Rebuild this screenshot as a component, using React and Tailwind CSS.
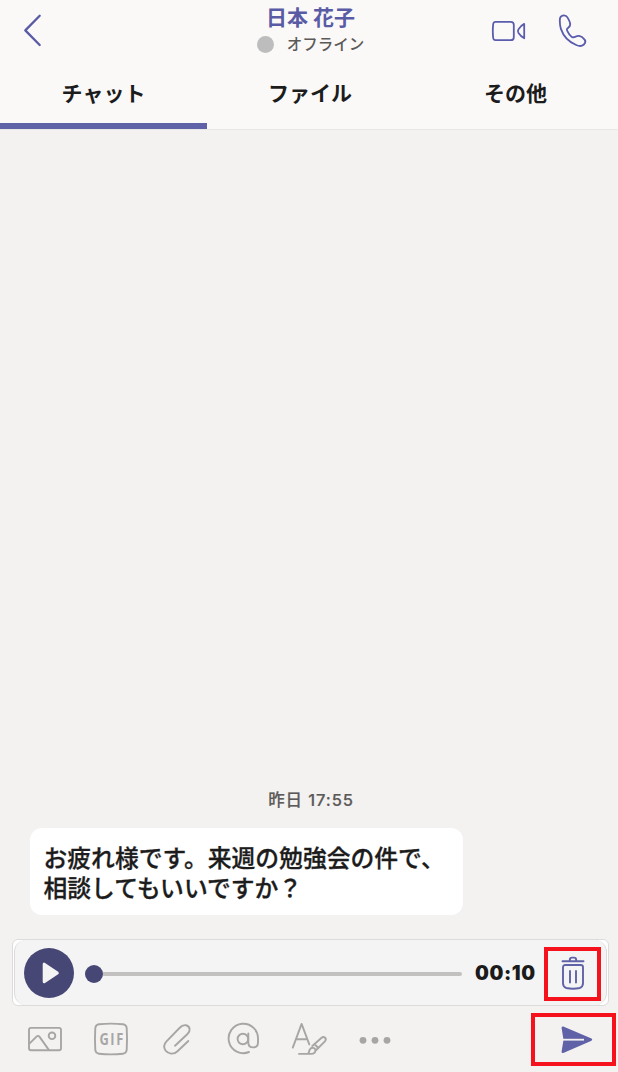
const tabs = ["チャット", "ファイル", "その他"];

function BackIcon() {
  return (
    <svg width="22" height="36" viewBox="0 0 22 36" fill="none" stroke="#5a5ba5" strokeWidth="2.3" strokeLinecap="round" strokeLinejoin="round">
      <path d="M18.7 3.7 4.3 18.4 18.7 33" />
    </svg>
  );
}

function VideoIcon() {
  return (
    <svg width="36" height="36" viewBox="0 0 36 36" fill="none" stroke="#5a5cad" strokeWidth="1.8" strokeLinejoin="round">
      <path d="M5.5 8.8h15.3q3 0 3 3v12.4q0 3-3 3H5.5q-2 0-2.300-2.200-.8-7 0-14 .3-2.200 2.300-2.200z" />
      <path d="M34.200 10.900v14.400c-2.500-1.300-4.200-3.100-5.700-5.300q-1.200-1.900 0-3.800c1.500-2.200 3.200-4 5.700-5.300z" />
    </svg>
  );
}

function PhoneIcon() {
  return (
    <svg width="32" height="36" viewBox="0 0 32 36" fill="none" stroke="#5a5cad" strokeWidth="1.8" strokeLinejoin="round">
      <path d="M5.300 3.200C7.400 2 10.200 2.200 11.600 4.600c1.600 2.600 2.700 4.800 2.600 7-.1 2-1.400 2.700-2.600 3.600-.9.7-1 1.400-.5 2.400 1.200 2.500 2.500 4.400 4.300 6.100.8.8 1.600.9 2.600.5 1.600-.6 3.100-1.500 5.100-1.300 2 .3 4.300 2.100 5.500 3.700 1.300 1.700.8 3.500-.7 4.900-2 1.800-4.700 1.900-7.700.5C12.700 29 7.400 23.200 4.900 15.900 4 13.200 3.800 10.600 3.800 7.500c0-1.900.1-3.500 1.500-4.300z" />
    </svg>
  );
}

function ToolIcon({ children }) {
  return (
    <div className="flex w-[66px] justify-center">
      <svg width="36" height="36" viewBox="0 0 36 36" fill="none" stroke="#a8a6a4" strokeWidth="1.9" strokeLinecap="round" strokeLinejoin="round">
        {children}
      </svg>
    </div>
  );
}

function Header() {
  return (
    <header className="h-[129px] bg-[#faf9f8]">
      <div className="flex h-[60px] justify-between">
        <div className="w-[170px] pt-3 pl-[21px]">
          <BackIcon />
        </div>
        <div className="flex w-[200px] flex-col items-center pt-[3px]">
          <div className="pl-[3px] text-[21px] leading-[27px] font-bold text-[#5a5ba5]">日本 花子</div>
          <div className="flex items-center gap-[13px] pl-[3px] text-[15.5px] leading-[26px] font-medium text-[#5c5a58]">
            <span className="mt-0.5 size-[17px] rounded-full bg-[#bdbdbd]" />
            オフライン
          </div>
        </div>
        <div className="flex w-[170px] gap-[30px] pt-[13px] pl-[42px]">
          <VideoIcon />
          <PhoneIcon />
        </div>
      </div>
      <div className="grid h-[69px] grid-cols-[207px_206px_205px]">
        {tabs.map((tab, i) => (
          <div key={tab} className={`flex justify-center border-b-[6px] pt-[17px] text-[21px] leading-[31px] font-bold text-[#1c1c1c] ${i === 0 ? "border-[#6062a7]" : "border-transparent"}`}>
            {tab}
          </div>
        ))}
      </div>
    </header>
  );
}

function VoiceBar() {
  return (
    <div className="ml-3 h-[67px] w-[597px] rounded-[6px] border border-[#dddcdb] bg-white px-px">
      <div className="flex h-full items-center rounded-[12px] border-x border-[#dddcdb] bg-[#f4f4f4] pl-[9px]">
        <div className="flex size-[50px] items-center justify-center rounded-full bg-[#464775]">
          <svg width="26" height="26" viewBox="0 0 26 26" fill="#f4f4f4" stroke="#f4f4f4" strokeWidth="3" strokeLinejoin="round">
            <path d="M8.200 4.200v17.600L21.300 13z" />
          </svg>
        </div>
        <div className="mt-[2px] ml-[11px] flex w-[377px] items-center">
          <div className="size-[18px] rounded-full bg-[#464775]" />
          <div className="h-1 flex-1 rounded-r-full bg-[#c3c1c0]" />
        </div>
        <div className="ml-[13px] w-[62px] font-[Inter] text-[19.5px] leading-6 font-black tracking-[0.6px] whitespace-nowrap text-[#1b1b1b]">00:10</div>
        <button className="mt-[3px] ml-[7px] flex h-[54px] w-[57px] items-center justify-center border-4 border-[#f5121d]">
          <svg width="28" height="36" viewBox="0 0 28 36" fill="none" stroke="#6062a7" strokeWidth="1.9" strokeLinecap="round" strokeLinejoin="round">
            <path d="M3.500 5.200h21M10.800 5.200V3.900q0-2.300 2.300-2.300h1.800q2.300 0 2.300 2.300V5.200" />
            <path d="M6.300 9h15.400q2.300 0 2.300 2.300v16q0 3.700-3.300 4.700-6.700 1.600-13.400 0-3.300-1-3.300-4.700V11.300Q4 9 6.300 9zM11 15v11.500M17 15v11.500" />
          </svg>
        </button>
      </div>
    </div>
  );
}

function Toolbar() {
  return (
    <div className="flex h-[66px] pt-[7px] pl-3">
      <div className="flex h-9 pt-[8px]">
        <ToolIcon>
          <rect x="2" y="6.900" width="32" height="22.400" rx="2" />
          <path d="M2.400 22.700 9.500 15.600q1.500-1.500 2.900 0l9.600 13.500" />
          <circle cx="25" cy="14.800" r="3.300" />
        </ToolIcon>
        <ToolIcon>
          <path d="M6 3.300q12-1.400 24 0 3.300.4 3.700 3.700.700 11 0 22-.4 3.300-3.700 3.700-12 1.400-24 0-3.300-.4-3.700-3.700-.700-11 0-22 .4-3.300 3.700-3.700z" />
          <text transform="translate(6.500 24.200) scale(0.78 1)" fill="#a8a6a4" stroke="none" className="font-['Open_Sans'] text-[16.5px] font-bold tracking-[2px]">GIF</text>
        </ToolIcon>
        <ToolIcon>
          <path d="M29.300 20 18.500 30.200C14.500 34 9 33 6.500 29.500c-2-3-1.500-6.500 1-9.200l13-13.300C24.500 2.500 30 3.800 30.600 8c.3 2-.600 3.500-2.100 5L16 24.700" />
        </ToolIcon>
        <ToolIcon>
          <path d="M24 31A14.700 14.700 0 1 1 33 18.400V21.500q0 4.900-4.800 4.900-4.900 0-4.900-4.900V12.400" />
          <circle cx="17.900" cy="18" r="5.300" />
        </ToolIcon>
        <ToolIcon>
          <path d="M1.800 26.600 10.600 2.900l7.700 20.500M4.800 18.300h10.800" />
          <path d="M21.300 25 30.300 17c2.900-2.400 5.900.7 3.600 3.300L25.200 29M8 32.900h12.200c3.200 0 4.600-2 4.100-4.300-.7-2.500-4.600-2.700-5.700.2-.5 1.400-.4 2.500-1.500 4M23.800 23.500l3.600 3.500" />
        </ToolIcon>
        <ToolIcon>
          <g fill="#a8a6a4" stroke="none">
            <circle cx="6" cy="19.300" r="3.400" />
            <circle cx="18" cy="19.300" r="3.400" />
            <circle cx="30" cy="19.300" r="3.400" />
          </g>
        </ToolIcon>
      </div>
      <button className="ml-[123px] flex h-[53px] w-[85px] shrink-0 items-center justify-center border-4 border-[#f5121d] pl-[6px]">
        <svg width="36" height="30" viewBox="0 0 36 30">
          <path d="M2.600 3 Q2.300 1 4.300 1.500 L32.500 13.600 Q34 14.700 32.500 15.800 L4.300 28 Q2.300 28.400 2.600 26.500 L4.500 14.700Z" fill="#6062a7" />
          <path d="M4 14.700h21" stroke="#f3f2f1" strokeWidth="1.800" />
        </svg>
      </button>
    </div>
  );
}

export default function App() {
  return (
    <div className="flex h-[1072px] w-[618px] flex-col overflow-hidden bg-[#f3f2f1] font-['Noto_Sans_CJK_JP',sans-serif]">
      <Header />
      <main className="flex h-[810px] flex-col justify-end border-t border-[#e9e8e7] pb-[24px]">
        <div className="pl-1 text-center font-[Inter,'Noto_Sans_CJK_JP',sans-serif] text-[16.5px] leading-6 font-medium tracking-[0.9px] text-[#5c5a58] [-webkit-text-stroke:0.2px_#5c5a58]">昨日 17:55</div>
        <div className="mt-4 ml-[30px] h-[87px] w-[433px] rounded-xl bg-white pt-[14px] pl-[13.5px] text-[23.8px] leading-[30px] font-medium whitespace-nowrap text-[#1c1c1c] [-webkit-text-stroke:0.3px_#1c1c1c]">
          お疲れ様です。来週の勉強会の件で、
          <br />
          相談してもいいですか？
        </div>
      </main>
      <VoiceBar />
      <Toolbar />
    </div>
  );
}
